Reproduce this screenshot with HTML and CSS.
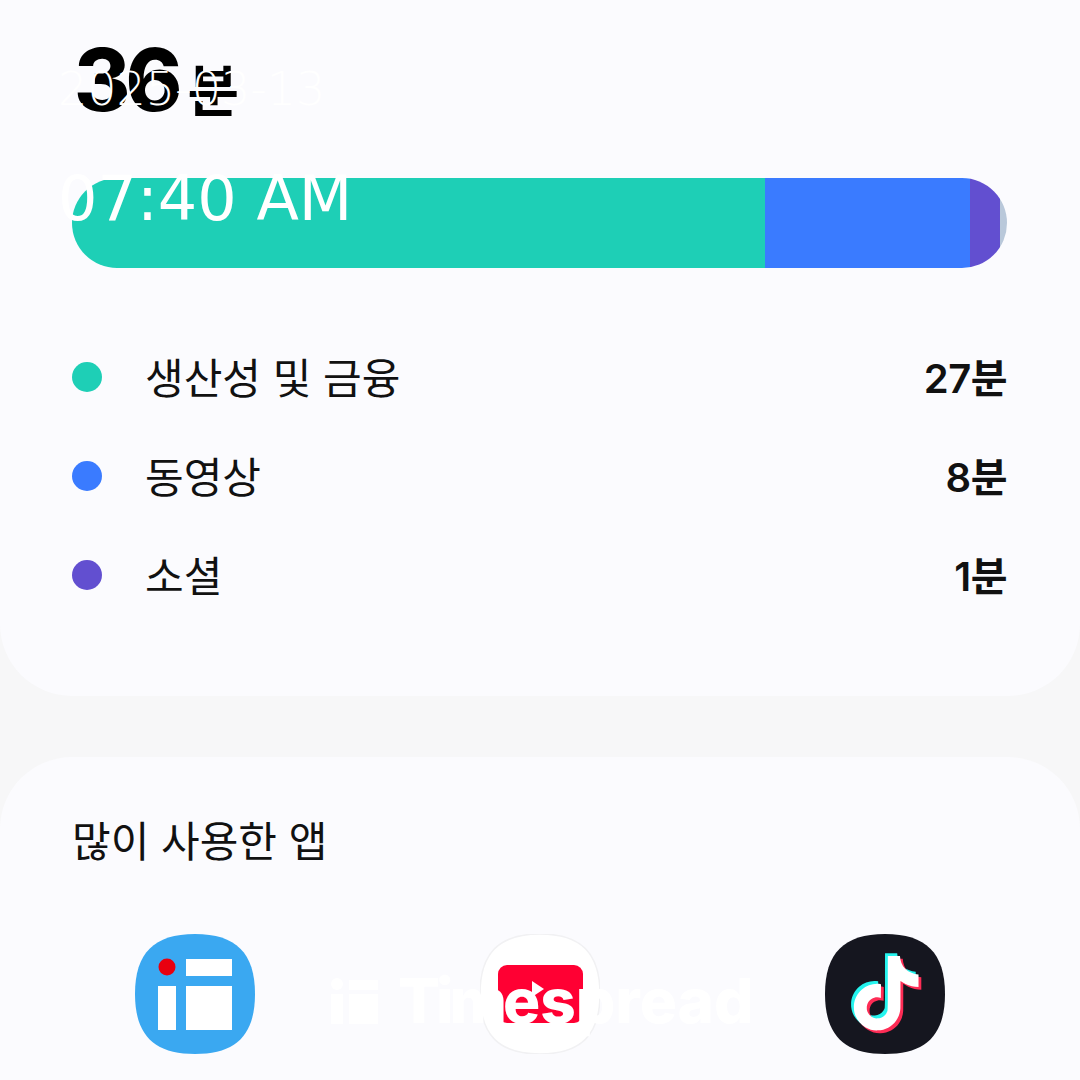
FILE: index.html
```html
<!DOCTYPE html>
<html lang="ko">
<head>
<meta charset="utf-8">
<title>화면 사용 시간</title>
<link rel="stylesheet" href="styles.css">
</head>
<body>
<svg class="defs" width="0" height="0" aria-hidden="true">
  <defs>
    <path id="note" d="M12.525.02c1.31-.02 2.61-.01 3.91-.02.08 1.53.63 3.09 1.75 4.17 1.12 1.11 2.7 1.62 4.24 1.79v4.03c-1.44-.05-2.89-.35-4.2-.97-.57-.26-1.1-.59-1.62-.93-.01 2.92.01 5.84-.02 8.75-.08 1.4-.54 2.79-1.35 3.94-1.31 1.92-3.58 3.17-5.91 3.21-1.43.08-2.86-.31-4.08-1.03-2.02-1.19-3.44-3.37-3.65-5.71-.02-.5-.03-1-.01-1.49.18-1.9 1.12-3.72 2.58-4.96 1.66-1.44 3.98-2.13 6.15-1.72.02 1.48-.04 2.96-.04 4.44-.99-.32-2.15-.23-3.02.37-.63.41-1.11 1.04-1.36 1.75-.21.51-.15 1.07-.14 1.61.24 1.64 1.82 3.02 3.5 2.87 1.12-.01 2.19-.66 2.77-1.61.19-.33.4-.67.41-1.06.1-1.79.06-3.57.07-5.36.01-4.03-.01-8.05.02-12.07z"/>
    <path id="squircle" d="M60 0C101 0 120 19 120 60S101 120 60 120 0 101 0 60 19 0 60 0Z"/>
  </defs>
</svg>

<main class="screen">
  <section class="card card-usage">
    <div class="total"><span class="total-num">36</span><span class="total-unit">분</span></div>
    <div class="bar">
      <span class="seg seg-teal"></span>
      <span class="seg seg-blue"></span>
      <span class="seg seg-purple"></span>
      <span class="seg seg-grey"></span>
    </div>
    <ul class="legend">
      <li class="legend-row"><span class="dot dot-teal"></span><span class="legend-name">생산성 및 금융</span><span class="legend-val">27분</span></li>
      <li class="legend-row"><span class="dot dot-blue"></span><span class="legend-name">동영상</span><span class="legend-val">8분</span></li>
      <li class="legend-row"><span class="dot dot-purple"></span><span class="legend-name">소셜</span><span class="legend-val">1분</span></li>
    </ul>
  </section>

  <section class="card card-apps">
    <h2 class="apps-title">많이 사용한 앱</h2>
    <div class="apps">
      <svg class="app-icon" viewBox="0 0 120 120" role="img" aria-label="앱 1">
        <use href="#squircle" fill="#3aa8f1"/>
        <circle cx="32" cy="33" r="8.5" fill="#e8000f"/>
        <rect x="23" y="52" width="18" height="44" fill="#fff"/>
        <rect x="51" y="25" width="46" height="17" fill="#fff"/>
        <rect x="51" y="52" width="46" height="44" fill="#fff"/>
      </svg>
      <svg class="app-icon" viewBox="0 0 120 120" role="img" aria-label="앱 2">
        <use href="#squircle" fill="#fff" stroke="#f1f1f3" stroke-width="1.5"/>
        <rect x="18" y="31" width="85" height="58" rx="9" fill="#ff0033"/>
        <path d="M52 47L64 55 52 63Z" fill="#fff"/>
      </svg>
      <svg class="app-icon" viewBox="0 0 120 120" role="img" aria-label="앱 3">
        <use href="#squircle" fill="#15161f"/>
        <g transform="translate(24 22) scale(3.1)">
          <use href="#note" fill="#25f4ee" transform="translate(-.9 -.9)"/>
          <use href="#note" fill="#fe2c55" transform="translate(.9 .9)"/>
          <use href="#note" fill="#fff"/>
        </g>
      </svg>
    </div>
  </section>
</main>

<!-- Capture stamp and brand mark printed over the screen -->
<div class="stamp stamp-date">2025-03-13</div>
<div class="stamp stamp-time">07:40 AM</div>
<div class="brand">
  <svg class="brand-mark" viewBox="0 0 48 46" aria-hidden="true">
    <circle cx="7" cy="6" r="6" fill="#fff"/>
    <rect x="1" y="16" width="12" height="30" fill="#fff"/>
    <rect x="19" y="2" width="29" height="10" fill="#fff"/>
    <rect x="19" y="16" width="29" height="30" fill="#fff"/>
  </svg>
  <span class="brand-name"><span class="brand-tight">Tim</span>espread</span>
</div>
</body>
</html>
```
FILE: styles.css
```css
* { box-sizing: border-box; }

html, body {
  margin: 0;
  height: 1080px;
  overflow: hidden;
  background: #f7f7f8;
  font-family: "Noto Sans CJK KR", "Noto Sans", sans-serif;
  color: #1c1c1e;
}

.defs { position: absolute; }

.screen { display: flex; flex-direction: column; gap: 61px; height: 1080px; overflow: hidden; }

.card { flex: none; background: #fbfbfe; padding-left: 72px; padding-right: 73px; }

.card-usage {
  height: 696px;
  padding-top: 35px;
  border-radius: 0 0 72px 72px;
}

.card-apps {
  padding-top: 54px;
  height: 323px;
  border-radius: 72px 72px 0 0;
}

.total {
  display: flex;
  align-items: baseline;
  height: 143px;
  color: #000;
  font-family: Inter, "Noto Sans CJK KR", sans-serif;
  font-weight: 800;
  line-height: 90px;
}
.total-num { font-size: 86px; letter-spacing: -5px; margin-left: 2px; }
.total-unit { font-size: 56px; margin-left: 10px; font-weight: 700; }

.bar {
  display: flex;
  height: 90px;
  border-radius: 45px;
  overflow: hidden;
}
.seg { display: block; }
.seg-teal { width: 693px; background: #1ecfb6; }
.seg-blue { width: 205px; background: #3a7bff; }
.seg-purple { width: 30px; background: #624fd0; }
.seg-grey { width: 7px; background: #b9c8da; }

.legend { list-style: none; margin: 59px 0 0; padding: 0; display: flex; flex-direction: column; }

.legend-row { display: flex; align-items: center; height: 99px; font-size: 42px; }

.dot { width: 30px; height: 30px; border-radius: 50%; flex: none; margin-right: 43px; }
.dot-teal { background: #1ecfb6; }
.dot-blue { background: #3a7bff; }
.dot-purple { background: #624fd0; }

.legend-name { flex: 1; color: #111; font-weight: 400; padding-bottom: 2px; }
.legend-val {
  font-family: Inter, "Noto Sans CJK KR", sans-serif;
  font-weight: 600;
  font-size: 40px;
  letter-spacing: -.5px;
  color: #111;
  padding-bottom: 2px;
}

.apps-title {
  margin: 0;
  font-size: 42px;
  font-weight: 400;
  line-height: 56px;
  color: #111;
}

.apps {
  display: grid;
  grid-template-columns: repeat(3, 345px);
  margin: 67px 0 0 -49.5px;
}
.app-icon { width: 120px; height: 120px; justify-self: center; display: block; }

/* Overlaid text */
.stamp {
  position: absolute;
  color: #fff;
  white-space: nowrap;
}
.stamp-date { left: 58px; top: 66px; font: 200 46px/1 "DejaVu Sans", sans-serif; }
.stamp-time { left: 58px; top: 168px; font: 400 62px/1 "DejaVu Sans", sans-serif; }

.brand {
  position: absolute;
  left: 330px;
  top: 970px;
  display: flex;
  align-items: center;
  gap: 20px;
  color: #fff;
}
.brand-mark { width: 48px; height: 46px; display: block; }
.brand-name { font: 800 62px/1 Inter, sans-serif; white-space: nowrap; }
.brand-tight { letter-spacing: -4px; }
```
